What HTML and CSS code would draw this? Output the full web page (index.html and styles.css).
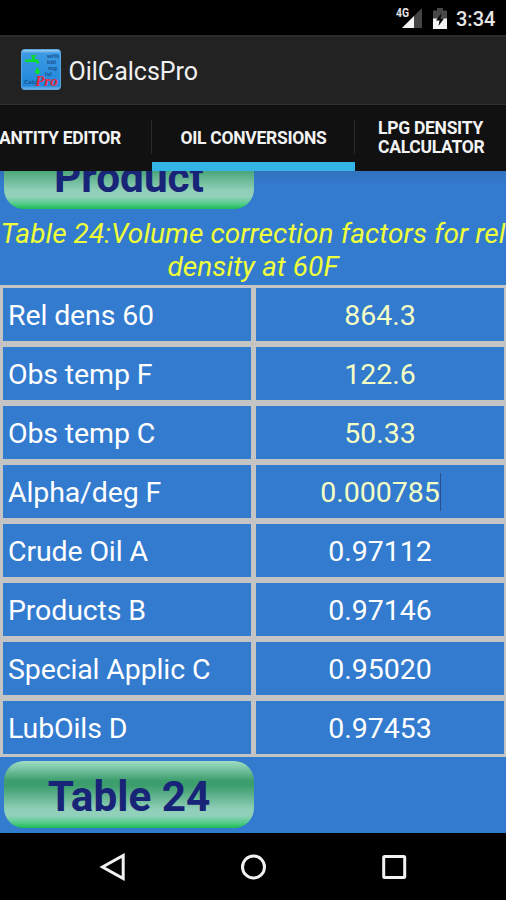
FILE: index.html
```html
<!DOCTYPE html>
<html lang="en">
<head>
<meta charset="utf-8">
<title>OilCalcsPro</title>
<link rel="stylesheet" href="styles.css">
</head>
<body>
<div class="screen">
  <header class="status">
    <svg class="signal" width="28" height="24" viewBox="0 0 28 24">
      <path d="M26 3V23H6Z" fill="#444"/>
      <path d="M18 11V23H6Z" fill="#f4f4f4"/>
      <text x="0" y="12" class="network" textLength="13" lengthAdjust="spacingAndGlyphs">4G</text>
    </svg>
    <svg class="battery" width="14" height="21" viewBox="0 0 14 21">
      <path d="M0 2.5H4V0H10V2.5H14V11H0Z" fill="#484848"/>
      <path d="M0 10.5H14V21H0Z" fill="#f4f4f4"/>
      <path d="M8.5 5L3 12.5H6.5L5.5 18L11 10.5H7.5Z" fill="#080808"/>
    </svg>
    <span class="clock">3:34</span>
  </header>
  <div class="appbar">
    <svg class="logo" width="40" height="41" viewBox="0 0 40 41">
      <defs><linearGradient id="tile" x2="0" y2="1"><stop offset="0" stop-color="#a9d5f5"/><stop offset=".1" stop-color="#3c9ae4"/><stop offset=".9" stop-color="#2187da"/><stop offset="1" stop-color="#76b9ec"/></linearGradient></defs>
      <rect x=".5" y=".5" width="39" height="40" rx="3" fill="url(#tile)" stroke="#5ba5df"/>
      <path d="M10 6H15.500V7.500H13.500V10H16L18 12.500V14.500H15V13H4V10.500H11V7.500H10Z" fill="#0ddc2e"/>
      <path d="M16 18L19 22.500L17.500 25H15L14 22.500Z" fill="#0ddc2e"/>
      <g class="logo-notes"><text x="26" y="9">wt%</text><text x="26" y="15">bbl</text><text x="27" y="21">mg</text><text x="24" y="27">lsl</text><text x="3" y="35">Calcs</text></g>
      <text x="14" y="37" class="logo-pro" textLength="23" lengthAdjust="spacingAndGlyphs">Pro</text>
    </svg>
    <span class="app-name">OilCalcsPro</span>
  </div>
  <nav class="tabs">
    <div class="tab first"><span>QUANTITY EDITOR</span></div>
    <div class="tab active"><span>OIL CONVERSIONS</span></div>
    <div class="tab last"><span>LPG DENSITY<br>CALCULATOR</span></div>
  </nav>
  <main class="content">
    <div class="clip"><button class="btn">Product</button></div>
    <h1 class="title">Table 24:Volume correction factors for rel<br>density at 60F</h1>
    <div class="table">
      <div class="cell">Rel dens 60</div><div class="cell value input">864.3</div>
      <div class="cell">Obs temp F</div><div class="cell value input">122.6</div>
      <div class="cell">Obs temp C</div><div class="cell value input">50.33</div>
      <div class="cell">Alpha/deg F</div><div class="cell value input focus">0.000785</div>
      <div class="cell">Crude Oil A</div><div class="cell value">0.97112</div>
      <div class="cell">Products B</div><div class="cell value">0.97146</div>
      <div class="cell">Special Applic C</div><div class="cell value">0.95020</div>
      <div class="cell">LubOils D</div><div class="cell value">0.97453</div>
    </div>
    <button class="btn bottom">Table 24</button>
  </main>
  <footer class="navbar">
    <svg width="28" height="28" viewBox="0 0 28 28"><path d="M24.2 2.500V25.500L3.500 14Z"/></svg>
    <svg width="28" height="28" viewBox="0 0 28 28"><circle cx="14.500" cy="14" r="11"/></svg>
    <svg width="28" height="28" viewBox="0 0 28 28"><rect x="3.700" y="3.500" width="21" height="21" rx="1"/></svg>
  </footer>
</div>
</body>
</html>
```
FILE: styles.css
```css
* { box-sizing: border-box; }
body { margin: 0; background: #000; font-family: Roboto, sans-serif; }
.screen { width: 506px; height: 900px; overflow: hidden; display: flex; flex-direction: column; }
.status { height: 35px; flex: none; background: #000; display: flex; align-items: flex-start; padding-left: 396px; }
.signal { margin-top: 5px; flex: none; }
.network { font: 700 12px Roboto, sans-serif; fill: #e4e4e4; }
.battery { margin: 8px 0 0 9px; flex: none; }
.clock { margin: 7px 0 0 9px; font-size: 20px; line-height: 24px; font-weight: 500; color: #e6e6e6; }
.appbar { height: 70px; flex: none; background: #222; border-top: 2px solid #2c2c2c; border-bottom: 1px solid #303030; display: flex; align-items: center; padding-left: 21px; }
.logo { flex: none; margin-top: -2px; }
.logo-notes { font: 700 6px "Liberation Sans", sans-serif; fill: #17518e; }
.logo-pro { font: italic 700 14px "Liberation Serif", serif; fill: #e8273f; }
.app-name { margin: 1px 0 0 7.500px; font-size: 25px; color: #f1f1f1; }
.tabs { height: 66px; flex: none; background: #111; display: grid; grid-template-columns: 152px 203px 151px; color: #f3f3f3; font-size: 17.500px; letter-spacing: -0.28px; font-weight: 700; line-height: 19px; }
.tab { display: flex; align-items: center; white-space: nowrap; background: linear-gradient(#292929, #292929) right 15px / 1px 34px no-repeat; }
.first { justify-content: flex-end; padding-right: 31px; overflow: hidden; }
.active { justify-content: center; border-bottom: 9px solid #33b5e5; padding-top: 9px; }
.last { background: none; padding-left: 23px; }
.content { height: 662px; flex: none; background: #337bcf; }
.clip { height: 38px; overflow: hidden; display: flex; align-items: flex-end; padding-left: 4px; background: linear-gradient(#3171bd, #337bcf 14px); }
.btn { display: flex; align-items: center; justify-content: center; flex: none; width: 250px; height: 67px; padding: 3px 0 0; border: 0; border-radius: 20px; background: linear-gradient(#a0dcc4 0%, #89cfb2 7%, #3d9e6d 29%, #3d9e6d 37%, #90cfb8 72%, #91d1bb 82%, #54cc8b 92%, #22be58 99%); font: 700 42.300px Roboto, sans-serif; color: #182478; }
.title { margin: 0 -4px; height: 75.500px; padding-top: 8px; font-size: 28px; letter-spacing: 0.08px; font-weight: 400; font-style: italic; line-height: 33px; text-align: center; color: #efff3a; white-space: nowrap; }
.table { height: 472px; background: #c4c4c4; padding: 3px 2px 2.500px 3px; display: grid; grid-template-columns: 248px 248px; grid-template-rows: repeat(8, 1fr); gap: 5.500px 5px; }
.cell { display: flex; align-items: center; background: #337bcf; color: #fff; font-size: 28.500px; letter-spacing: -0.13px; padding: 1.500px 0 0 5px; white-space: nowrap; }
.value { justify-content: center; padding-left: 0; letter-spacing: 0; }
.input { color: #f4ffc4; }
.focus::after { content: ""; width: 1px; height: 38px; margin-right: -1px; background: #29508c; }
.bottom { margin: 4.500px 0 0 4px; }
.navbar { height: 67px; flex: none; background: #000; display: flex; justify-content: center; gap: 112.500px; padding-top: 20px; }
.navbar svg { fill: none; stroke: #f2f2f2; stroke-width: 3; }
```
